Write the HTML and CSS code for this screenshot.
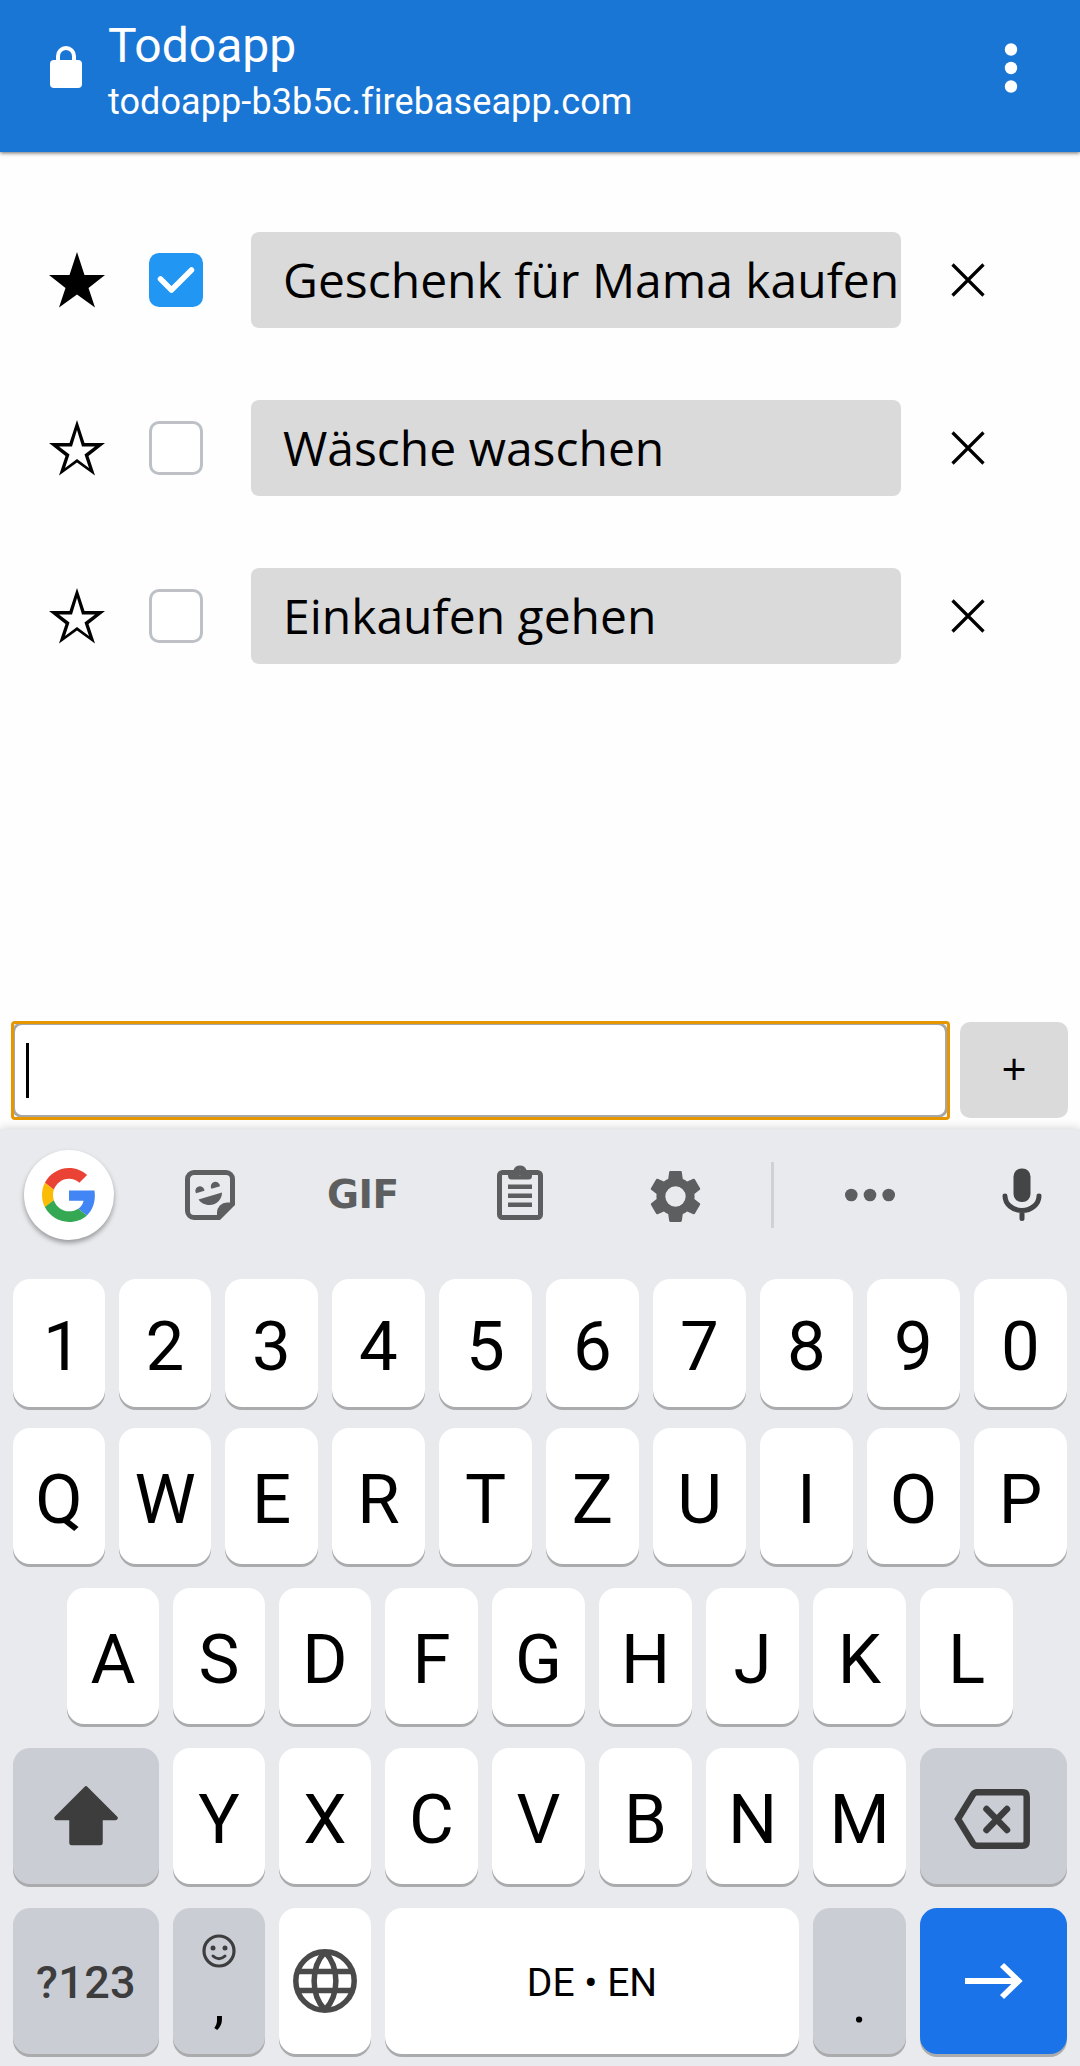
FILE: index.html
```html
<!DOCTYPE html>
<html lang="de">
<head>
<meta charset="utf-8">
<title>Todoapp</title>
<link rel="stylesheet" href="styles.css">
</head>
<body>
<header class="bar">
  <svg class="lock" width="32" height="42" viewBox="0 0 32 42"><path d="M8 18V10a8 8 0 0 1 16 0v8" fill="none" stroke="#fff" stroke-width="4"/><rect y="14" width="32" height="28" rx="4" fill="#fff"/></svg>
  <div class="site">
    <div class="site-title">Todoapp</div>
    <div class="site-url">todoapp-b3b5c.firebaseapp.com</div>
  </div>
  <svg class="more" width="14" height="50" viewBox="0 0 14 50"><g fill="#fff"><circle cx="7" cy="6.5" r="6.2"/><circle cx="7" cy="25" r="6.2"/><circle cx="7" cy="43.5" r="6.2"/></g></svg>
</header>
<main class="page">
  <ul class="todos">
    <li class="todo">
      <svg class="star" width="58" height="58" viewBox="0 0 58 58"><path d="M29 1 36.5 24H57L40.500 37 47 56.500 29 43.500 11 56.500 17.500 37 1 24H21.500Z"/></svg>
      <span class="check checked"><svg width="54" height="54" viewBox="0 0 54 54"><path d="M11.500 26 22.500 37 42.500 17" fill="none" stroke="#fff" stroke-width="5.500" stroke-linecap="round" stroke-linejoin="round"/></svg></span>
      <span class="label">Geschenk für Mama kaufen</span>
      <svg class="remove" width="34" height="34" viewBox="0 0 34 34"><path d="M1.500 1.500 32.500 32.500M32.500 1.500 1.500 32.500" stroke="#000" stroke-width="3.200"/></svg>
    </li>
    <li class="todo">
      <svg class="star" width="58" height="58" viewBox="0 0 58 58"><path fill-rule="evenodd" d="M29 1 36.500 24H57L40.500 37 47 56.500 29 43.500 11 56.500 17.500 37 1 24H21.500ZM29 11 24 27.500H11L21.500 35.500 17 49 29 40 41 49 36.500 35.500 47 27.500H34Z"/></svg>
      <span class="check"></span>
      <span class="label">Wäsche waschen</span>
      <svg class="remove" width="34" height="34" viewBox="0 0 34 34"><path d="M1.500 1.500 32.500 32.500M32.500 1.500 1.500 32.500" stroke="#000" stroke-width="3.200"/></svg>
    </li>
    <li class="todo">
      <svg class="star" width="58" height="58" viewBox="0 0 58 58"><path fill-rule="evenodd" d="M29 1 36.500 24H57L40.500 37 47 56.500 29 43.500 11 56.500 17.500 37 1 24H21.500ZM29 11 24 27.500H11L21.500 35.500 17 49 29 40 41 49 36.500 35.500 47 27.500H34Z"/></svg>
      <span class="check"></span>
      <span class="label">Einkaufen gehen</span>
      <svg class="remove" width="34" height="34" viewBox="0 0 34 34"><path d="M1.500 1.500 32.500 32.500M32.500 1.500 1.500 32.500" stroke="#000" stroke-width="3.200"/></svg>
    </li>
  </ul>
  <div class="entry">
    <div class="field"><span class="caret"></span></div>
    <div class="add">+</div>
  </div>
</main>
<section class="keyboard">
  <div class="tools">
    <div class="google"><svg width="54" height="54" viewBox="0 0 48 48"><path fill="#EA4335" d="M24 9.500c3.540 0 6.710 1.220 9.210 3.600l6.850-6.850C35.900 2.380 30.470 0 24 0 14.620 0 6.510 5.380 2.560 13.220l7.980 6.190C12.430 13.720 17.740 9.500 24 9.500z"/><path fill="#4285F4" d="M46.980 24.550c0-1.570-.150-3.090-.380-4.550H24v9.020h12.940c-.580 2.960-2.260 5.480-4.780 7.180l7.730 6c4.510-4.180 7.090-10.360 7.090-17.650z"/><path fill="#FBBC05" d="M10.530 28.590c-.480-1.450-.760-2.990-.760-4.590s.270-3.140.760-4.590l-7.980-6.190C.920 16.460 0 20.120 0 24c0 3.880.920 7.540 2.560 10.780l7.970-6.190z"/><path fill="#34A853" d="M24 48c6.480 0 11.930-2.130 15.890-5.810l-7.730-6c-2.150 1.450-4.920 2.300-8.160 2.300-6.260 0-11.570-4.220-13.470-9.910l-7.980 6.190C6.510 42.620 14.620 48 24 48z"/></svg></div>
    <svg class="t-sticker" width="50" height="50" viewBox="0 0 50 50" fill="#5d5e60"><path d="M47.500 33V9a6.500 6.500 0 0 0-6.500-6.500H9A6.500 6.500 0 0 0 2.500 9v32A6.500 6.500 0 0 0 9 47.500h25" fill="none" stroke="#5d5e60" stroke-width="5"/><path d="M50 32.500V35L35 50h-3V42.500a10 10 0 0 1 10-10Z"/><path d="M11 23.300A4.600 4.600 0 1 1 19.500 20.800ZM26.500 18.800A4.600 4.600 0 1 1 35 16.300ZM13.500 29.500 37 22.500C37 29 32 35 24.500 35 19.500 35 15.500 32.500 13.500 29.500Z"/></svg>
    <span class="t-gif">GIF</span>
    <svg class="t-clip" width="46" height="55" viewBox="0 0 46 55" fill="#5d5e60"><rect x="2.500" y="7.500" width="41" height="45" rx="3" fill="none" stroke="#5d5e60" stroke-width="5"/><path fill-rule="evenodd" d="M11 5h5.500a7 7 0 0 1 13 0H35v6a3.500 3.500 0 0 1-3.500 3.500h-17A3.500 3.500 0 0 1 11 11ZM23 4.800a2.700 2.700 0 1 0 0 5.400 2.700 2.700 0 0 0 0-5.400Z"/><path d="M11 19.500h24v4.500H11zM11 28.500h24V33H11zM11 37.500h24V42H11z"/></svg>
    <svg class="t-gear" width="61" height="61" viewBox="0 0 24 24"><path fill="#5d5e60" fill-rule="evenodd" d="M19.430 12.980c.040-.320.070-.640.070-.980s-.030-.660-.070-.980l2.110-1.650c.190-.150.240-.420.120-.640l-2-3.460c-.120-.220-.390-.300-.610-.220l-2.490 1c-.520-.400-1.080-.730-1.690-.980l-.380-2.650C14.460 2.180 14.250 2 14 2h-4c-.250 0-.460.180-.490.420l-.380 2.650c-.610.250-1.170.590-1.690.980l-2.490-1c-.230-.090-.490 0-.610.220l-2 3.460c-.130.220-.070.490.120.640l2.110 1.650c-.040.320-.070.650-.070.980s.030.660.070.980l-2.110 1.650c-.190.150-.240.420-.120.640l2 3.460c.120.220.390.300.610.220l2.490-1c.520.400 1.080.730 1.690.980l.380 2.650c.030.240.240.420.490.420h4c.250 0 .460-.180.490-.420l.380-2.650c.610-.250 1.170-.590 1.690-.980l2.490 1c.230.090.490 0 .610-.220l2-3.460c.120-.220.070-.490-.120-.640l-2.110-1.650zM12 16a4 4 0 1 1 0-8 4 4 0 0 1 0 8z"/></svg>
    <span class="t-divider"></span>
    <svg class="t-dots" width="50" height="14" viewBox="0 0 50 14" fill="#5d5e60"><circle cx="6.300" cy="7" r="6.300"/><circle cx="25" cy="7" r="6.300"/><circle cx="43.700" cy="7" r="6.300"/></svg>
    <svg class="t-mic" width="40" height="54" viewBox="0 0 40 54"><rect x="11.500" y="0.500" width="17" height="33.500" rx="8" fill="#444547"/><path d="M3 28a17 14.500 0 0 0 34 0M20 42.500V50.500" fill="none" stroke="#444547" stroke-width="5" stroke-linecap="round"/></svg>
  </div>
  <div class="row digits"><span class="key narrow one">1</span><span class="key narrow">2</span><span class="key">3</span><span class="key">4</span><span class="key">5</span><span class="key">6</span><span class="key">7</span><span class="key">8</span><span class="key">9</span><span class="key">0</span></div>
  <div class="row"><span class="key narrow">Q</span><span class="key narrow">W</span><span class="key">E</span><span class="key">R</span><span class="key">T</span><span class="key">Z</span><span class="key">U</span><span class="key">I</span><span class="key">O</span><span class="key">P</span></div>
  <div class="row"><span class="key narrow">A</span><span class="key narrow">S</span><span class="key narrow">D</span><span class="key">F</span><span class="key">G</span><span class="key">H</span><span class="key">J</span><span class="key">K</span><span class="key">L</span></div>
  <div class="row">
    <span class="key wide mod"><svg width="64" height="60" viewBox="0 0 64 60"><path d="M32 2.500 61.500 32H46.500V57H17.500V32H2.500Z" fill="#3d3d3e" stroke="#3d3d3e" stroke-width="4.500" stroke-linejoin="round"/></svg></span>
    <span class="key narrow">Y</span><span class="key narrow">X</span><span class="key">C</span><span class="key">V</span><span class="key">B</span><span class="key">N</span><span class="key">M</span>
    <span class="key wide-end mod delete"><svg width="76" height="60" viewBox="0 0 76 60" fill="none" stroke="#3d3d3e"><path d="M23 3.300H68.500Q72.700 3.300 72.700 7.500V52.500Q72.700 56.700 68.500 56.700H23Q20.500 56.700 19 54.500L4 30 19 5.500Q20.500 3.300 23 3.300Z" stroke-width="6.500"/><path d="M32.500 20 53 41M53 20 32.500 41" stroke-width="6.500" stroke-linecap="round"/></svg></span>
  </div>
  <div class="row bottom">
    <span class="key wide mod symbols">?123</span>
    <span class="key narrow mod punct"><svg width="34" height="34" viewBox="0 0 34 34"><circle cx="17" cy="17" r="15" fill="none" stroke="#3d3d3e" stroke-width="3.200"/><circle cx="11" cy="14" r="2.500" fill="#3d3d3e"/><circle cx="23" cy="14" r="2.500" fill="#3d3d3e"/><path d="M11 22Q17 27.500 23 22" fill="none" stroke="#3d3d3e" stroke-width="3" stroke-linecap="round"/></svg><span>,</span></span>
    <span class="key narrow"><svg width="64" height="64" viewBox="0 0 64 64" fill="none" stroke="#4a4a4a" stroke-width="5.500"><circle cx="32" cy="32" r="29.200"/><path d="M5 22.500H59M5 41.500H59M32 3C17.500 18 17.500 46 32 61M32 3C46.500 18 46.500 46 32 61"/></svg></span>
    <span class="key space">DE • EN</span>
    <span class="key mod punct"><span>.</span></span>
    <span class="key wide-end enter"><svg width="58" height="38" viewBox="0 0 58 38" fill="none" stroke="#fff" stroke-width="5.800"><path d="M0 19H53M37 3 53.500 19 37 35"/></svg></span>
  </div>
</section>
</body>
</html>
```
FILE: styles.css
```css
* { box-sizing: border-box; }
body { margin: 0; width: 1080px; height: 2066px; background: #fefefe; color: #000; font-family: Roboto, sans-serif; display: flex; flex-direction: column; overflow: hidden; }
svg { display: block; flex: none; }

.bar { height: 152px; flex: none; display: flex; align-items: center; padding: 0 62px 0 50px; background: #1a76d4; color: #fff; box-shadow: 0 1px 4px rgba(0, 0, 0, .6); }
.lock { margin-top: -18px; }
.site { margin-left: 26px; flex: 1; align-self: flex-start; padding-top: 18px; }
.site-title { font-size: 48px; line-height: 56px; }
.site-url { font-size: 36px; line-height: 48px; margin-top: 4px; letter-spacing: .08px; }
.more { margin-top: -16px; }

.page { flex: 1; display: flex; flex-direction: column; padding: 80px 12px 11px; font-family: "Open Sans", sans-serif; }
.todos { list-style: none; margin: 0; padding: 0 0 0 36px; display: flex; flex-direction: column; gap: 72px; flex: 1; }
.todo { height: 96px; display: flex; align-items: center; }
.check { width: 54px; height: 54px; flex: none; margin: 0 48px 0 43px; border: 3px solid #bdc1c6; border-radius: 10px; background: #fff; }
.checked { border: 0; background: #2196f3; }
.label { width: 650px; height: 96px; line-height: 96px; padding-left: 32px; border-radius: 8px; background: #dadada; font-size: 48px; white-space: nowrap; overflow: hidden; }
.remove { margin-left: 50px; }

.entry { display: flex; gap: 12px; height: 96px; }
.field { position: relative; width: 936px; border: 3px solid #a6a6a6; border-radius: 10px; background: #fff; display: flex; align-items: center; padding-left: 11px; }
.field::after { content: ""; position: absolute; inset: -4.500px; border: 3px solid #e69700; border-radius: 4px; }
.caret { width: 3px; height: 55px; background: #000; }
.add { width: 108px; border-radius: 10px; background: #dadada; font-size: 44px; line-height: 93px; text-align: center; }

.keyboard { height: 937px; flex: none; background: #e8eaed; padding: 0 13px; display: flex; flex-direction: column; gap: 24px; box-shadow: 0 -1px 9px rgba(0, 0, 0, .16); }
.tools { height: 132px; display: flex; align-items: center; padding-left: 11px; margin-bottom: -6px; }
.google { width: 90px; height: 90px; border-radius: 50%; background: #fff; display: flex; align-items: center; justify-content: center; box-shadow: 0 3px 5px rgba(0, 0, 0, .35); }
.t-sticker { margin-left: 71px; }
.t-gif { width: 72px; margin: 0 0 0 92px; font-family: "DejaVu Sans", sans-serif; font-size: 39px; font-weight: 700; line-height: 50px; letter-spacing: -.5px; color: #5d5e60; }
.t-clip { margin: -5px 0 0 98px; }
.t-gear { margin: 2px 0 0 102px; }
.t-divider { width: 3px; height: 66px; margin-left: 65px; background: #d0d1d5; }
.t-dots { margin-left: 71px; }
.t-mic { margin-left: 107px; }

.row { height: 136px; display: flex; justify-content: center; gap: 14px; }
.digits { height: 128px; margin-bottom: -3px; }
.bottom { height: 146px; }
.key { width: 93px; display: flex; align-items: center; justify-content: center; border-radius: 17px; background: #fff; box-shadow: 0 3px 0 #aaabad; font-size: 69px; line-height: 80px; }
.row .key:not(:has(svg)) { padding-top: 7px; }
.narrow { width: 92px; }
.row .one { padding-left: 7px; }
.wide { width: 146px; }
.wide-end { width: 147px; }
.mod { background: #cbcdd5; }
.delete { padding: 6px 3px 0 0; }
.row .key.symbols { font-size: 45px; font-weight: 500; color: #3d3d3e; padding-top: 3px; letter-spacing: .3px; }
.row .key.punct { flex-direction: column; justify-content: space-between; padding: 26px 0 31px; font-size: 56px; }
.row .key.punct:not(:has(svg)) { justify-content: flex-end; }
.punct span { line-height: 40px; }
.row .key.space { flex: 1; font-size: 39px; padding-top: 3px; }
.enter { background: #1a73e8; }
```
